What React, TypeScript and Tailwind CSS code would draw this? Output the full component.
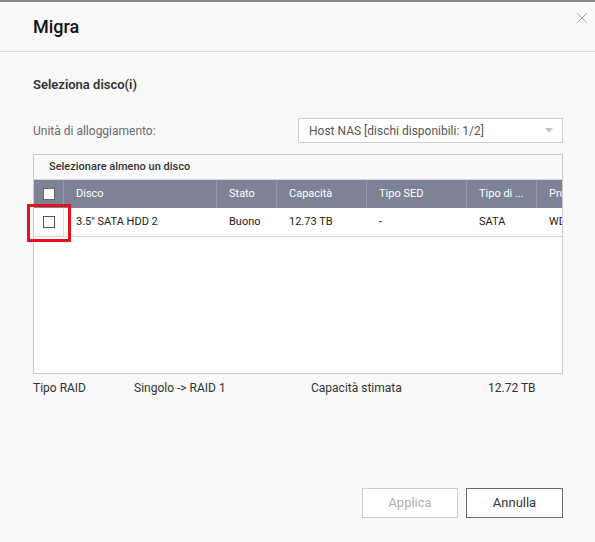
import { X } from "lucide-react";

const cols = [
  { label: "Disco", w: "w-[153px]" },
  { label: "Stato", w: "w-[60px]" },
  { label: "Capacità", w: "w-[90px]" },
  { label: "Tipo SED", w: "w-[100px]" },
  { label: "Tipo di ...", w: "w-[70px]" },
  { label: "Produttore", w: "w-[60px]" },
];

const row = ['3.5" SATA HDD 2', "Buono", "12.73 TB", "-", "SATA", "WDC"];

export default function App() {
  return (
    <div className="w-[595px] h-[542px] bg-[#f9f9f9] border-t-2 border-[#8a8a8a] font-['Roboto',sans-serif] text-[#333] flex flex-col overflow-hidden">
      {/* Header */}
      <div className="relative h-[50px] border-b border-[#dcdcdc] flex items-center px-[33px] shrink-0">
        <h1 className="text-[18px] font-medium text-[#111] -mt-px">Migra</h1>
        <button className="absolute right-[4px] top-[7px] text-[#8c8c8c]">
          <X size={18} strokeWidth={1.1} />
        </button>
      </div>

      <div className="pl-[33px] pr-[32px] flex flex-col flex-1">
        <h2 className="text-[13px] font-semibold text-[#333] mt-[25px] leading-[16px]">Seleziona disco(i)</h2>

        <div className="flex items-center justify-between mt-[25px] h-[25px]">
          <span className="text-[12px] text-[#6a6a6a]">Unità di alloggiamento:</span>
          <div className="w-[265px] h-[25px] bg-white border border-[#cfcfcf] flex items-center justify-between pl-[10px] pr-[9px]">
            <span className="text-[12px] text-[#555]">Host NAS [dischi disponibili: 1/2]</span>
            <span className="w-0 h-0 border-l-[4px] border-r-[4px] border-t-[5px] border-l-transparent border-r-transparent border-t-[#c4c4c4]" />
          </div>
        </div>

        {/* Table */}
        <div className="relative mt-[11px]">
          <div className="h-[220px] bg-white border border-[#c9c9c9] flex flex-col overflow-hidden">
            <div className="h-[25px] bg-[#fafafa] border-b border-[#d6d6d6] flex items-center pl-[15px] text-[11px] font-medium text-[#333] shrink-0">
              Selezionare almeno un disco
            </div>
            <div className="flex h-[28px] bg-[#7c8396] text-white text-[11px] whitespace-nowrap shrink-0">
              <div className="w-[30px] shrink-0 flex items-center justify-center border-r border-[#9399aa]">
                <span className="w-[12px] h-[12px] bg-white border border-[#666]" />
              </div>
              {cols.map((c) => (
                <div key={c.label} className={`${c.w} shrink-0 flex items-center px-[12px] border-r border-[#9399aa] overflow-hidden`}>
                  {c.label}
                </div>
              ))}
            </div>
            <div className="flex h-[29px] text-[11px] text-[#222] border-b border-[#d6d6d6] whitespace-nowrap shrink-0">
              <div className="w-[30px] shrink-0 flex items-center justify-center border-r border-[#e2e2e2]">
                <span className="w-[12px] h-[12px] bg-white border border-[#555]" />
              </div>
              {cols.map((c, i) => (
                <div key={c.label} className={`${c.w} shrink-0 flex items-center px-[12px] overflow-hidden`}>
                  {row[i]}
                </div>
              ))}
            </div>
          </div>
          {/* annotation */}
          <div className="absolute left-[-6px] top-[50px] w-[44px] h-[38px] border-[3px] border-[#e3121b] pointer-events-none" />
        </div>

        <div className="flex text-[12px] text-[#333] mt-[7px] h-[14px] items-center">
          <span className="w-[101px]">Tipo RAID</span>
          <span className="w-[177px]">Singolo -&gt; RAID 1</span>
          <span className="w-[177px]">Capacità stimata</span>
          <span>12.72 TB</span>
        </div>

        <div className="flex justify-end gap-[8px] mt-[93px]">
          <button className="w-[96px] h-[30px] bg-white border border-[#cfcfcf] text-[13px] text-[#b0b0b0]">Applica</button>
          <button className="w-[97px] h-[30px] bg-white border border-[#6a6a6a] text-[13px] text-[#333]">Annulla</button>
        </div>
      </div>
    </div>
  );
}
